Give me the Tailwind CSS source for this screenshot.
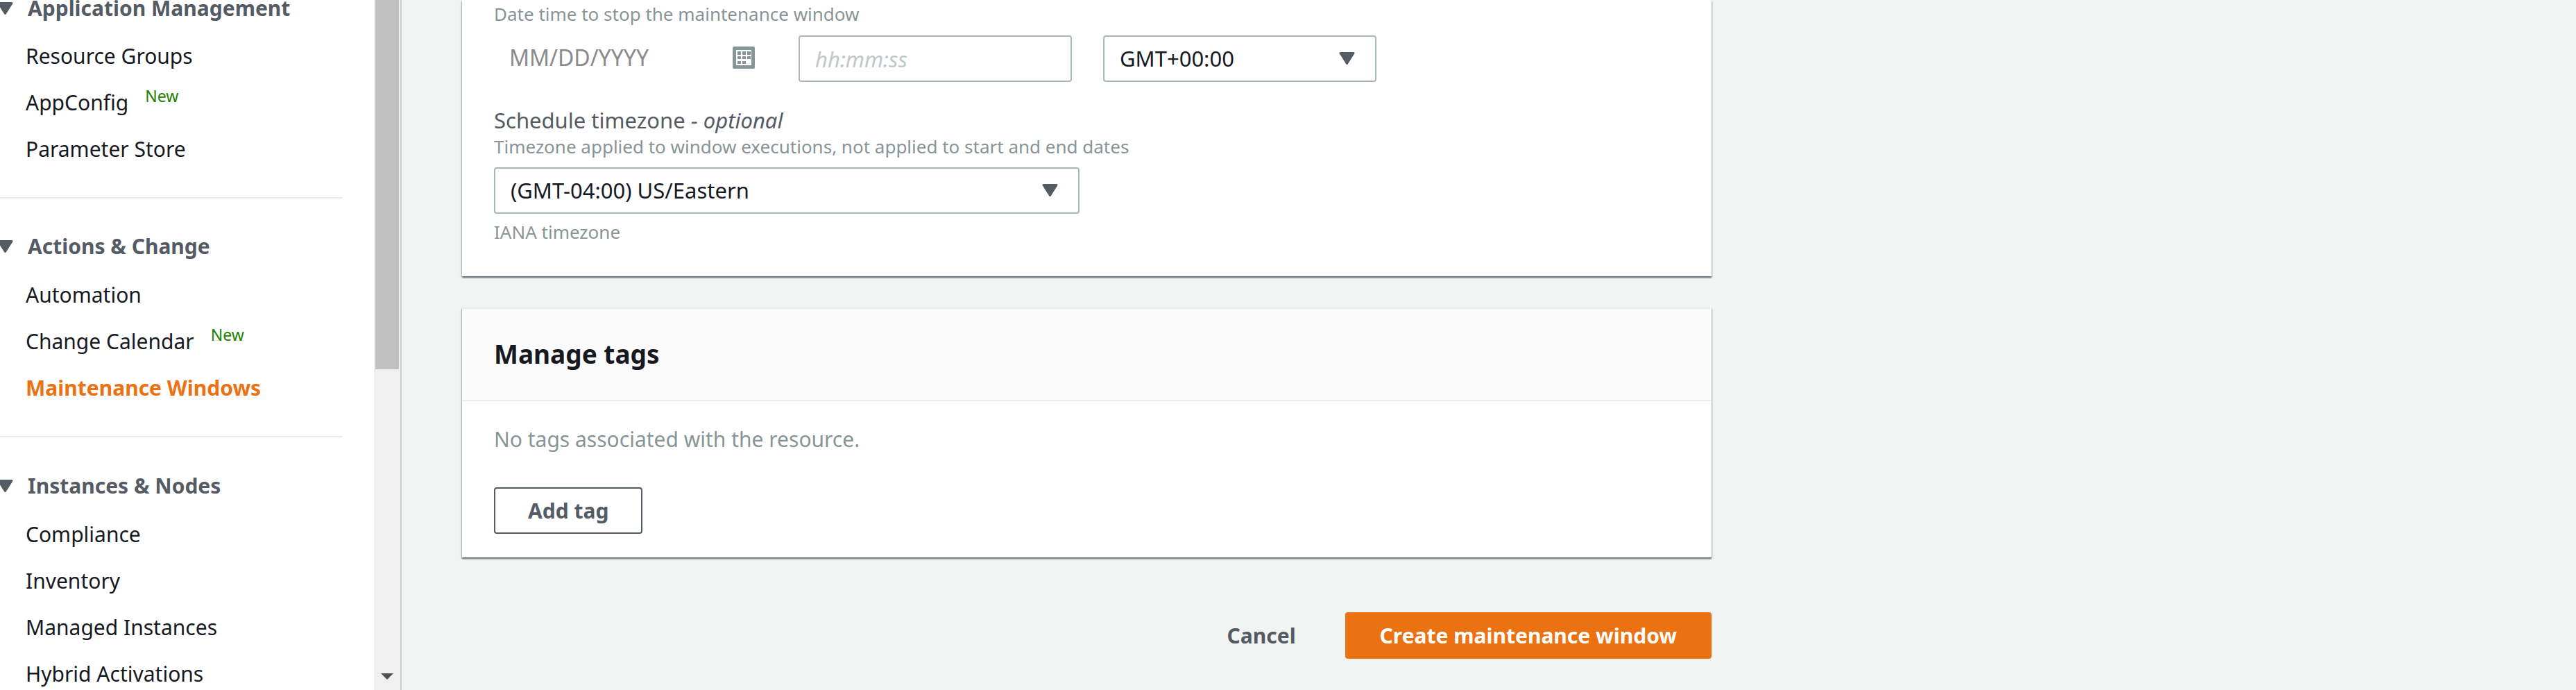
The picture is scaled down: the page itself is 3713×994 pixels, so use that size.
<!DOCTYPE html>
<html lang="en">
<head>
<meta charset="utf-8">
<meta name="viewport" content="width=device-width, initial-scale=1">
<title>Create maintenance window</title>
<script src="https://cdn.jsdelivr.net/npm/@tailwindcss/browser@4"></script>
</head>
<body class="flex h-screen overflow-hidden bg-[#f2f4f3] font-['Noto_Sans','Open_Sans',sans-serif] text-[30px] text-[#16191f]">

<svg class="hidden" aria-hidden="true">
  <symbol id="caret" viewBox="0 0 23 18">
    <path d="M2 1.5h19L11.500 16.500z" fill="currentColor" stroke="currentColor" stroke-width="3" stroke-linejoin="round"/>
  </symbol>
</svg>

<aside class="flex shrink-0 overflow-hidden border-r-2 border-[#cbced1] bg-white">
  <nav aria-label="Systems Manager" class="w-[539px]">
    <section class="mr-[45px] border-b-2 border-[#eaeded] pb-[36px]">
      <h2><button type="button" aria-expanded="true" class="-ml-1 flex h-[23px] items-center gap-[21px] font-bold leading-[23px] text-[#545b64]"><svg class="h-[18px] w-[23px]"><use href="#caret"/></svg>Application Management</button></h2>
      <ul class="mt-[24px] pl-[37px] leading-[67px]">
        <li class="h-[67px]"><a href="#">Resource Groups</a></li>
        <li class="flex h-[67px] gap-[24px]"><a href="#">AppConfig</a><span class="text-[23px] leading-[49px] text-[#1d8102]">New</span></li>
        <li class="h-[67px]"><a href="#">Parameter Store</a></li>
      </ul>
    </section>
    <section class="mr-[45px] border-b-2 border-[#eaeded] pt-[47px] pb-[36px]">
      <h2><button type="button" aria-expanded="true" class="-ml-1 flex h-[44px] items-center gap-[21px] font-bold leading-[44px] text-[#545b64]"><svg class="h-[18px] w-[23px]"><use href="#caret"/></svg>Actions &amp; Change</button></h2>
      <ul class="mt-[14px] pl-[37px] leading-[67px]">
        <li class="h-[67px]"><a href="#">Automation</a></li>
        <li class="flex h-[67px] gap-[24px]"><a href="#">Change Calendar</a><span class="text-[23px] leading-[49px] text-[#1d8102]">New</span></li>
        <li class="h-[67px]"><a href="#" aria-current="page" class="font-bold text-[#ec7211]">Maintenance Windows</a></li>
      </ul>
    </section>
    <section class="mr-[45px] pt-[48px]">
      <h2><button type="button" aria-expanded="true" class="-ml-1 flex h-[44px] items-center gap-[21px] font-bold leading-[44px] text-[#545b64]"><svg class="h-[18px] w-[23px]"><use href="#caret"/></svg>Instances &amp; Nodes</button></h2>
      <ul class="mt-[14px] pl-[37px] leading-[67px]">
        <li class="h-[67px]"><a href="#">Compliance</a></li>
        <li class="h-[67px]"><a href="#">Inventory</a></li>
        <li class="h-[67px]"><a href="#">Managed Instances</a></li>
        <li class="h-[67px]"><a href="#">Hybrid Activations</a></li>
      </ul>
    </section>
  </nav>
  <!-- scroll track -->
  <div class="flex w-[38px] flex-col items-center justify-between bg-[#f0f0f0] pb-[15px]" aria-hidden="true">
    <div class="h-[532px] w-[34px] bg-[#c1c1c1]"></div>
    <svg class="h-[9px] w-[18px]" viewBox="0 0 18 9"><path d="M0 0h18L9 9z" fill="#505050"/></svg>
  </div>
</aside>

<main class="min-w-0 flex-1 overflow-hidden px-[87px]">
  <form class="max-w-[1801px]">
    <section class="bg-white px-[46px] pt-[2px] pb-[46px] shadow-[0_2px_2px_0_#00141e80,1px_2px_2px_0_#001c2426,-1px_2px_2px_0_#001c2426]">
      <p class="text-[26px] leading-[36px] text-[#879596]" id="end-hint">Date time to stop the maintenance window</p>
      <div class="mt-[13px] flex items-start gap-[45px]">
        <div class="flex h-[64px] w-[394px] items-center justify-between pr-[18px] pl-[22px]">
          <input type="text" aria-label="End date" aria-describedby="end-hint" placeholder="MM/DD/YYYY" class="w-[240px] text-[32px] placeholder:text-[#8a8b8c] placeholder:opacity-100 outline-none">
          <button type="button" aria-label="Open calendar">
            <svg class="h-[32px] w-[32px]" viewBox="0 0 32 32">
              <rect width="32" height="32" rx="2" fill="#879596"/>
              <rect x="5" y="5" width="22" height="22" fill="#fff"/>
              <path d="M7 7h5v5H7zM14 7h5v5h-5zM21 7h5v5h-5zM7 14h5v4H7zM14 14h5v4h-5zM21 14h5v4h-5zM7 21h5v4H7zM14 21h5v4h-5z" fill="#879596"/>
            </svg>
          </button>
        </div>
        <input type="text" aria-label="End time" placeholder="hh:mm:ss" class="h-[67px] w-[394px] rounded-[4px] border-2 border-[#aab7b8] bg-white px-[22px] text-[31px] placeholder:text-[#bfc8c8] placeholder:italic placeholder:opacity-100">
        <div class="relative w-[394px]">
          <select aria-label="UTC offset" class="h-[67px] w-full appearance-none rounded-[4px] border-2 border-[#aab7b8] bg-white pr-[60px] pl-[22px] text-[31px]"><option>GMT+00:00</option></select>
          <svg class="pointer-events-none absolute top-[24px] right-[31px] h-[18px] w-[23px] text-[#545b64]"><use href="#caret"/></svg>
        </div>
      </div>
      <label for="tz" class="mt-[35px] block text-[31px] leading-[40px] text-[#545b64]">Schedule timezone - <i>optional</i></label>
      <p class="text-[26px] leading-[36px] text-[#879596]">Timezone applied to window executions, not applied to start and end dates</p>
      <div class="relative mt-[12px] w-[844px]">
        <select id="tz" class="block h-[67px] w-full appearance-none rounded-[4px] border-2 border-[#aab7b8] bg-white pr-[60px] pl-[22px] text-[31px]"><option>(GMT-04:00) US/Eastern</option></select>
        <svg class="pointer-events-none absolute top-[24px] right-[31px] h-[18px] w-[23px] text-[#545b64]"><use href="#caret"/></svg>
      </div>
      <p class="mt-[8px] text-[26px] leading-[36px] text-[#879596]">IANA timezone</p>
    </section>

    <section class="mt-[45px] border-t-2 border-[#eaeded] bg-white shadow-[0_2px_2px_0_#00141e80,1px_2px_2px_0_#001c2426,-1px_2px_2px_0_#001c2426]">
      <header class="border-b-2 border-[#eaeded] bg-[#fafafa] px-[46px] pt-[37px] pb-[38px]">
        <h2 class="font-bold text-[37px] leading-[56px]">Manage tags</h2>
      </header>
      <div class="px-[46px] pt-[35px] pb-[34px]">
        <p class="leading-[40px] text-[#879596]">No tags associated with the resource.</p>
        <button type="button" class="mt-[49px] block h-[67px] rounded-[4px] border-2 border-[#545b64] bg-white px-[47px] font-bold leading-[40px] text-[#545b64]">Add tag</button>
      </div>
    </section>

    <div class="mt-[79px] flex justify-end gap-[23px] font-bold leading-[40px]">
      <button type="button" class="h-[67px] px-[48px] text-[#545b64]">Cancel</button>
      <button type="submit" class="h-[67px] rounded-[4px] bg-[#ec7211] px-[50px] text-white">Create maintenance window</button>
    </div>
  </form>
</main>
</body>
</html>
